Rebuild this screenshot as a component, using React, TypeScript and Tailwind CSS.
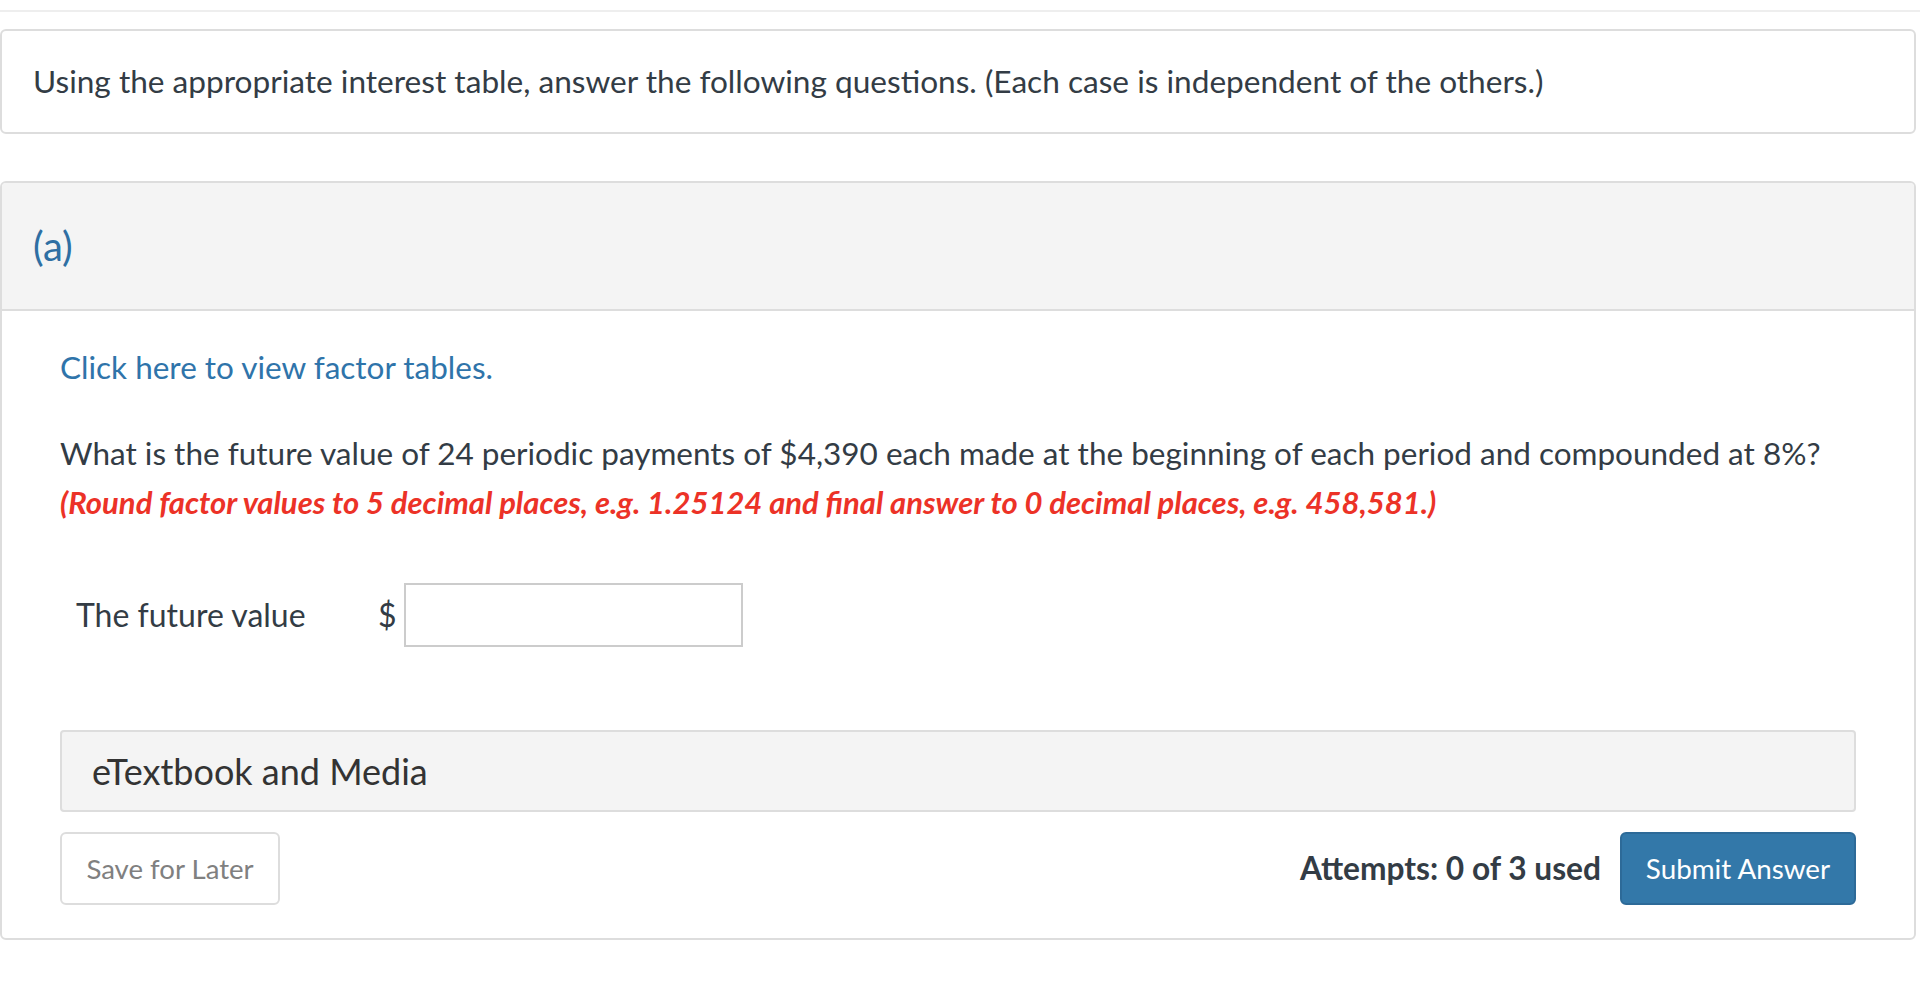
export default function App() {
  const font = { fontFamily: 'Lato, "Open Sans", sans-serif' };
  return (
    <div className="min-h-[986px] bg-white text-[#333c45]" style={font}>
      <div className="h-[12px] border-b-2 border-[#eeeeee]" />

      <div className="mr-[4px] mt-[17px] flex h-[105px] items-center rounded-[6px] border-2 border-[#dddddd] pl-[31px] text-[31.6px]">
        Using the appropriate interest table, answer the following questions. (Each case is independent of the others.)
      </div>

      <div className="mr-[4px] mt-[47px] h-[759px] overflow-hidden rounded-[6px] border-2 border-[#dddddd]">
        <div className="flex h-[128px] items-center border-b-2 border-[#dddddd] bg-[#f4f4f4] pl-[31px] text-[40px] text-[#2f6fa3]">
          (a)
        </div>

        <div className="px-[58px]">
          <div className="mt-[36px] text-[31.5px] leading-[40px] text-[#2f74aa]">
            Click here to view factor tables.
          </div>

          <div className="mt-[42px] text-[31.5px] leading-[49px]">
            <div>
              What is the future value of 24 periodic payments of $4,390 each made at the beginning of each period and compounded at 8%?
            </div>
            <div className="text-[31px] font-bold italic text-[#ec3227]">
              (Round factor values to 5 decimal places, e.g. 1.25124 and final answer to 0 decimal places, e.g. 458,581.)
            </div>
          </div>

          <div className="mt-[56px] flex items-center pl-[16px] text-[32px]">
            <span className="w-[302px]">The future value</span>
            <span className="w-[26px]">$</span>
            <div className="h-[64px] w-[339px] border-2 border-[#cccccc] bg-white" />
          </div>

          <div className="mt-[83px] flex h-[82px] items-center rounded-[4px] border-2 border-[#dddddd] bg-[#f4f4f4] pl-[30px] text-[36px] text-[#333333]">
            eTextbook and Media
          </div>

          <div className="mt-[20px] flex items-center justify-between">
            <button className="h-[73px] w-[220px] rounded-[6px] border-2 border-[#dddddd] bg-white text-[27.6px] text-[#808080]">
              Save for Later
            </button>
            <div className="flex items-center gap-[19px]">
              <span className="text-[31.7px] font-bold">Attempts: 0 of 3 used</span>
              <button className="h-[73px] w-[236px] rounded-[6px] border-2 border-[#2d6a98] bg-[#3378a9] text-[27.8px] text-white">
                Submit Answer
              </button>
            </div>
          </div>
        </div>
      </div>
    </div>
  );
}
